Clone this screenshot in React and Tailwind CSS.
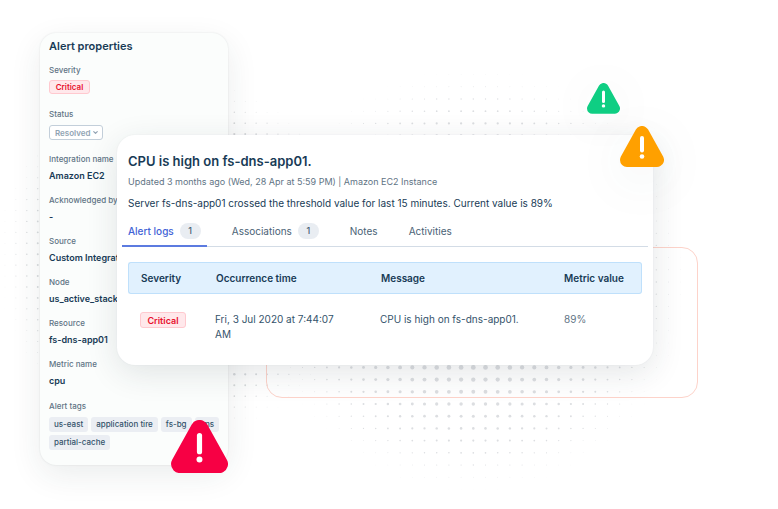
import { useState } from "react";
import { ChevronDown } from "lucide-react";

const details = [
  { label: "Integration name", value: "Amazon EC2" },
  { label: "Acknowledged by", value: "-" },
  { label: "Source", value: "Custom Integration" },
  { label: "Node", value: "us_active_stack" },
  { label: "Resource", value: "fs-dns-app01" },
  { label: "Metric name", value: "cpu" },
];

const tags = ["us-east", "application tire", "fs-bg", "rms", "partial-cache"];

const tabs = [
  { name: "Alert logs", count: 1 },
  { name: "Associations", count: 1 },
  { name: "Notes" },
  { name: "Activities" },
];

const logs = [
  {
    severity: "Critical",
    time: "Fri, 3 Jul 2020 at 7:44:07 AM",
    message: "CPU is high on fs-dns-app01.",
    value: "89%",
  },
];

// Halftone disc: dots on a square grid that shrink towards the rim
function halftone({ cx, cy, x0, y0, step, radius, slope, max }) {
  const dots = [];
  for (let i = -24; i <= 24; i++) {
    for (let j = -24; j <= 24; j++) {
      const x = x0 + i * step;
      const y = y0 + j * step;
      const r = Math.min(max, (radius - Math.hypot(x - cx, y - cy)) * slope);
      if (r > 0.15) dots.push({ x, y, r });
    }
  }
  return dots;
}

const leftDots = halftone({ cx: 178, cy: 258, x0: 234.3, y0: 254.2, step: 10.92, radius: 188, slope: 0.021, max: 1.3 });
const rightDots = halftone({ cx: 473, cy: 280, x0: 473.3, y0: 282, step: 12.2, radius: 220, slope: 0.018, max: 2.4 });

function Dots() {
  return (
    <svg className="absolute top-0 left-0" width="778" height="509" aria-hidden="true">
      <g fill="#d8dbdd">
        {leftDots.map((d) => (
          <circle key={`${d.x}-${d.y}`} cx={d.x} cy={d.y} r={d.r} />
        ))}
      </g>
      <g fill="#dcdee1">
        {rightDots.map((d) => (
          <circle key={`${d.x}-${d.y}`} cx={d.x} cy={d.y} r={d.r} />
        ))}
      </g>
    </svg>
  );
}

function WarningSign({ className }) {
  return (
    <svg viewBox="0 0 44 41" className={className} aria-hidden="true">
      <path d="M7 34 22 7l15 27Z" fill="currentColor" stroke="currentColor" strokeWidth="14" strokeLinejoin="round" />
      <path d="M22 12v12.5" stroke="#fff" strokeWidth="4" strokeLinecap="round" />
      <circle cx="22" cy="30.5" r="2.3" fill="#fff" />
    </svg>
  );
}

function AlertProperties() {
  const [status, setStatus] = useState("Resolved");

  return (
    <aside className="relative w-[188px] shrink-0 rounded-2xl bg-[#fbfdfc] pt-[5px] pr-[7px] pb-[15px] pl-[9px] shadow-[0_0_2px_rgba(30,50,60,0.12),0_10px_32px_rgba(30,50,60,0.09)]">
      <h2 className="text-[11px] leading-4 font-semibold text-[#183b56]">Alert properties</h2>

      <p className="mt-[10px] text-[8px] leading-3 font-medium text-[#5f7485]">Severity</p>
      <span className="mt-1 flex h-[14px] w-[41px] items-center justify-center rounded-[3px] border border-[#ffc9cf] bg-[#ffe8eb] text-[8px] font-semibold text-[#e8112d]">
        Critical
      </span>

      <label htmlFor="status" className="mt-[14px] block text-[8px] leading-3 font-medium text-[#5f7485]">Status</label>
      <div className="relative mt-[5px] w-[54px]">
        <select
          id="status"
          value={status}
          onChange={(e) => setStatus(e.target.value)}
          className="block h-[15px] w-full appearance-none rounded-[3px] border border-[#c3cfda] bg-white pl-[5px] text-[8px] leading-3 font-semibold text-[#91a3b3]"
        >
          <option>Resolved</option>
          <option>Open</option>
        </select>
        <ChevronDown className="pointer-events-none absolute top-1 right-1 size-[7px] text-[#91a3b3]" strokeWidth={4} />
      </div>

      <dl className="mt-[13px] flex flex-col gap-[11px] whitespace-nowrap">
        {details.map((d) => (
          <div key={d.label}>
            <dt className="text-[8px] leading-3 font-medium text-[#5f7485]">{d.label}</dt>
            <dd className="mt-1 text-[9px] leading-[14px] font-semibold text-[#183b56]">{d.value}</dd>
          </div>
        ))}
      </dl>

      <p className="mt-3 text-[8px] leading-3 font-medium text-[#5f7485]">Alert tags</p>
      <ul className="-mr-1 mt-[5px] flex flex-wrap gap-x-[3px] gap-y-[3px]">
        {tags.map((t) => (
          <li key={t} className="rounded-[3px] bg-[#ebeef3] px-[5px] text-[8px] leading-[15px] font-medium text-[#34536b]">
            {t}
          </li>
        ))}
      </ul>

      <WarningSign className="absolute right-0 -bottom-2 w-[57px] text-[#f70044]" />
    </aside>
  );
}

function AlertDetail() {
  const [active, setActive] = useState("Alert logs");

  return (
    <section className="relative rounded-[18px] bg-white px-[11px] pt-4 pb-[23px] shadow-[0_0_2px_rgba(30,50,60,0.06),0_8px_32px_rgba(30,50,60,0.12)]">
      <h1 className="text-[13px] leading-5 font-semibold text-[#183b56]">CPU is high on fs-dns-app01.</h1>
      <p className="mt-[3px] text-[9px] leading-4 text-[#5f7485]">
        Updated 3 months ago (Wed, 28 Apr at 5:59 PM) | Amazon EC2 Instance
      </p>
      <p className="mt-[5px] text-[10px] leading-4 text-[#183b56]">
        Server fs-dns-app01 crossed the threshold value for last 15 minutes. Current value is 89%
      </p>

      <div role="tablist" className="-mx-[6px] mt-3 flex gap-[19px] border-b border-[#d3dce6]">
        {tabs.map((t) => (
          <button
            key={t.name}
            role="tab"
            aria-selected={active === t.name}
            onClick={() => setActive(t.name)}
            className={`-mb-px flex items-center gap-[6px] border-b-2 px-[6px] pb-[6px] text-[10px] leading-4
              ${active === t.name ? "border-[#5c7be0] font-medium text-[#4263d6]" : "border-transparent text-[#4a6275]"}`}
          >
            {t.name}
            {t.count && (
              <span className="h-4 w-[21px] rounded-full bg-[#e9edf2] text-[9px] leading-4 font-medium text-[#4a6275]">{t.count}</span>
            )}
          </button>
        ))}
      </div>

      <table className="mt-[15px] w-full table-fixed border-separate border-spacing-0 text-left text-[10px] leading-[15px] text-[#34536b]">
        <colgroup>
          <col className="w-[76px]" />
          <col className="w-[165px]" />
          <col />
          <col className="w-[90px]" />
        </colgroup>
        <thead>
          <tr>
            {["Severity", "Occurrence time", "Message", "Metric value"].map((h) => (
              <th
                key={h}
                className="h-8 border-y border-[#bfe0fb] bg-[#e1f1fe] pl-3 font-semibold whitespace-nowrap text-[#183b56] first:rounded-l-[3px] first:border-l last:rounded-r-[3px] last:border-r"
              >
                {h}
              </th>
            ))}
          </tr>
        </thead>
        <tbody>
          {logs.map((l) => (
            <tr key={l.time} className="align-top">
              <td className="pt-[18px] pl-3">
                <span className="flex h-4 w-[46px] items-center justify-center rounded-[3px] border border-[#ffc9cf] bg-[#ffe8eb] text-[9px] font-semibold text-[#e8112d]">
                  {l.severity}
                </span>
              </td>
              <td className="pt-[18px] pr-7 pl-[11px]">{l.time}</td>
              <td className="pt-[18px] pl-[11px]">{l.message}</td>
              <td className="pt-[18px] pl-3 text-[#5f7485]">{l.value}</td>
            </tr>
          ))}
        </tbody>
      </table>
    </section>
  );
}

export default function App() {
  return (
    <main className="relative min-h-screen overflow-hidden bg-white pt-[33px] pr-[125px] pb-11 pl-10 font-['Inter',sans-serif]">
      <Dots />
      <div className="flex items-start">
        <AlertProperties />
        <div className="relative mt-[102px] -ml-[111px] min-w-0 flex-1">
          <div className="absolute top-[112px] -right-[45px] -bottom-[33px] left-[149px] rounded-2xl border border-[#fdd3ca]" />
          <AlertDetail />
          <WarningSign className="absolute -top-[52px] right-[33px] w-[33px] text-[#0fce83] drop-shadow-[0_4px_20px_rgba(30,50,60,0.05)]" />
          <WarningSign className="absolute -top-[9px] -right-[11px] w-[44px] text-[#ffa000] drop-shadow-[0_10px_24px_rgba(30,50,60,0.07)]" />
        </div>
      </div>
    </main>
  );
}
